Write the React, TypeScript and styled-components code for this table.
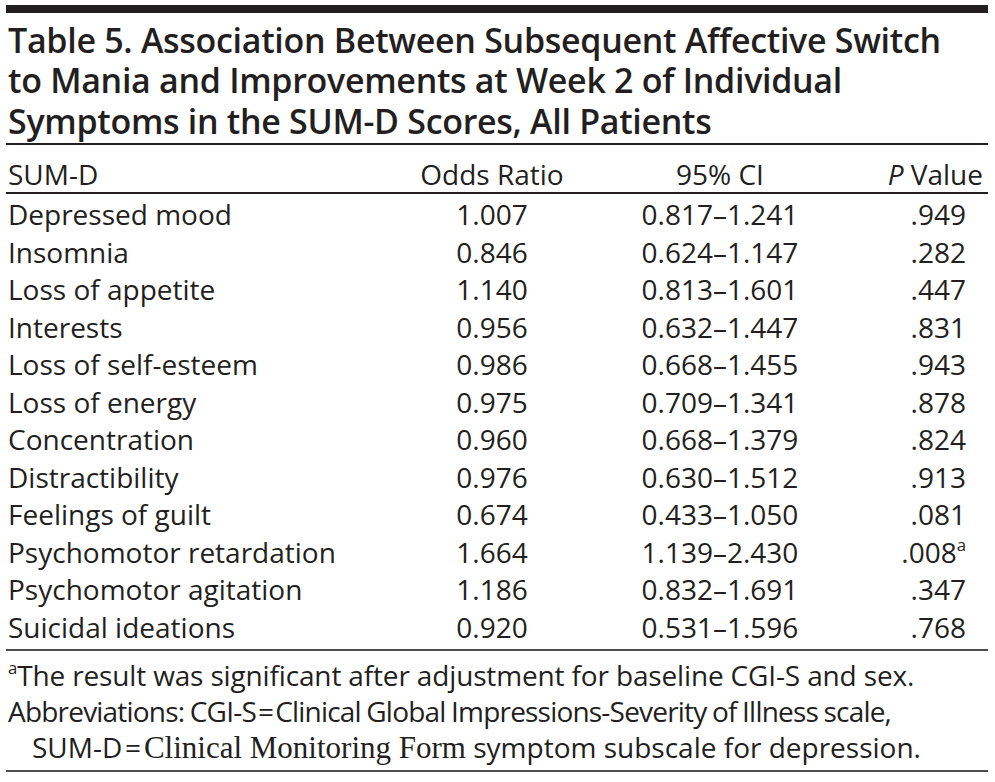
import styled, { createGlobalStyle } from "styled-components";

const GlobalStyle = createGlobalStyle`
  html, body {
    margin: 0;
    padding: 0;
    background: #ffffff;
  }
  body {
    font-family: "Open Sans", "Noto Sans", sans-serif;
    color: #231f20;
  }
`;

const Frame = styled.div`
  width: 982px;
  margin: 5px 0 0 6px;
  border-top: 8px solid #231f20;
`;

const Title = styled.h1`
  margin: 0;
  padding: 6.6px 0 1.9px 2px;
  font-size: 34px;
  font-weight: 600;
  line-height: 40.5px;
  letter-spacing: -0.3px;
  white-space: nowrap;
  border-bottom: 2.5px solid #231f20;
`;

const Table = styled.table`
  width: 100%;
  border-collapse: collapse;
  table-layout: fixed;
  font-size: 28px;
`;

const HeadCell = styled.th<{ $align?: string; $pad?: number }>`
  font-weight: 400;
  text-align: ${({ $align }) => $align || "center"};
  padding: 10.6px ${({ $pad }) => $pad ?? 0}px 0
    ${({ $align }) => ($align === "left" ? 2 : 0)}px;
  line-height: 36px;
  white-space: nowrap;
  border-bottom: 2px solid #231f20;
`;

const Body = styled.tbody`
  tr:first-child td {
    padding-top: 2.9px;
  }
  tr:last-child td {
    padding-bottom: 3px;
    border-bottom: 2px solid #4d4d4d;
  }
`;

const Cell = styled.td<{ $align?: string; $pad?: number }>`
  text-align: ${({ $align }) => $align || "center"};
  padding: 0 ${({ $pad }) => $pad ?? 0}px 0
    ${({ $align }) => ($align === "left" ? 2 : 0)}px;
  line-height: 37.5px;
  white-space: nowrap;
`;

const Sup = styled.sup`
  font-size: 0.6em;
  line-height: 0;
  vertical-align: 0.72em;
`;

const Notes = styled.div`
  padding: 5.8px 0 4.2px 2px;
  font-size: 28px;
  line-height: 36px;
  white-space: nowrap;
  border-bottom: 2px solid #4d4d4d;
`;

const Note = styled.p<{ $indent?: boolean; $track?: number; $words?: number }>`
  margin: 0;
  padding-left: ${({ $indent }) => ($indent ? "24px" : "0")};
  letter-spacing: ${({ $track }) => $track ?? 0}px;
  word-spacing: ${({ $words }) => $words ?? 0}px;
`;

const Serif = styled.span`
  font-family: "Liberation Serif", "DejaVu Serif", serif;
  font-size: 31px;
  letter-spacing: 0;
`;

const rows: [string, string, string, string, boolean?][] = [
  ["Depressed mood", "1.007", "0.817–1.241", ".949"],
  ["Insomnia", "0.846", "0.624–1.147", ".282"],
  ["Loss of appetite", "1.140", "0.813–1.601", ".447"],
  ["Interests", "0.956", "0.632–1.447", ".831"],
  ["Loss of self-esteem", "0.986", "0.668–1.455", ".943"],
  ["Loss of energy", "0.975", "0.709–1.341", ".878"],
  ["Concentration", "0.960", "0.668–1.379", ".824"],
  ["Distractibility", "0.976", "0.630–1.512", ".913"],
  ["Feelings of guilt", "0.674", "0.433–1.050", ".081"],
  ["Psychomotor retardation", "1.664", "1.139–2.430", ".008", true],
  ["Psychomotor agitation", "1.186", "0.832–1.691", ".347"],
  ["Suicidal ideations", "0.920", "0.531–1.596", ".768"],
];

export default function App() {
  return (
    <>
      <GlobalStyle />
      <Frame>
        <Title>
          Table 5. Association Between Subsequent Affective Switch
          <br />
          to Mania and Improvements at Week 2 of Individual
          <br />
          Symptoms in the SUM-D Scores, All Patients
        </Title>
        <Table>
          <colgroup>
            <col style={{ width: 390 }} />
            <col style={{ width: 192 }} />
            <col style={{ width: 264 }} />
            <col style={{ width: 136 }} />
          </colgroup>
          <thead>
            <tr>
              <HeadCell $align="left">SUM-D</HeadCell>
              <HeadCell>Odds Ratio</HeadCell>
              <HeadCell>95% CI</HeadCell>
              <HeadCell $align="right" $pad={5}>
                <i>P</i> Value
              </HeadCell>
            </tr>
          </thead>
          <Body>
            {rows.map(([name, or, ci, p, sig]) => (
              <tr key={name}>
                <Cell $align="left">{name}</Cell>
                <Cell>{or}</Cell>
                <Cell>{ci}</Cell>
                <Cell $align="right" $pad={22}>
                  {p}
                  {sig && <Sup>a</Sup>}
                </Cell>
              </tr>
            ))}
          </Body>
        </Table>
        <Notes>
          <Note $track={-0.15}>
            <Sup>a</Sup>The result was significant after adjustment for baseline
            CGI-S and sex.
          </Note>
          <Note $track={-0.8} $words={-1}>
            Abbreviations: CGI-S{"\u200a=\u200a"}Clinical Global
            Impressions-Severity of Illness scale,
          </Note>
          <Note $indent>
            SUM-D{"\u200a=\u200a"}
            <Serif>Clinical Monitoring Form</Serif> symptom subscale for
            depression.
          </Note>
        </Notes>
      </Frame>
    </>
  );
}
